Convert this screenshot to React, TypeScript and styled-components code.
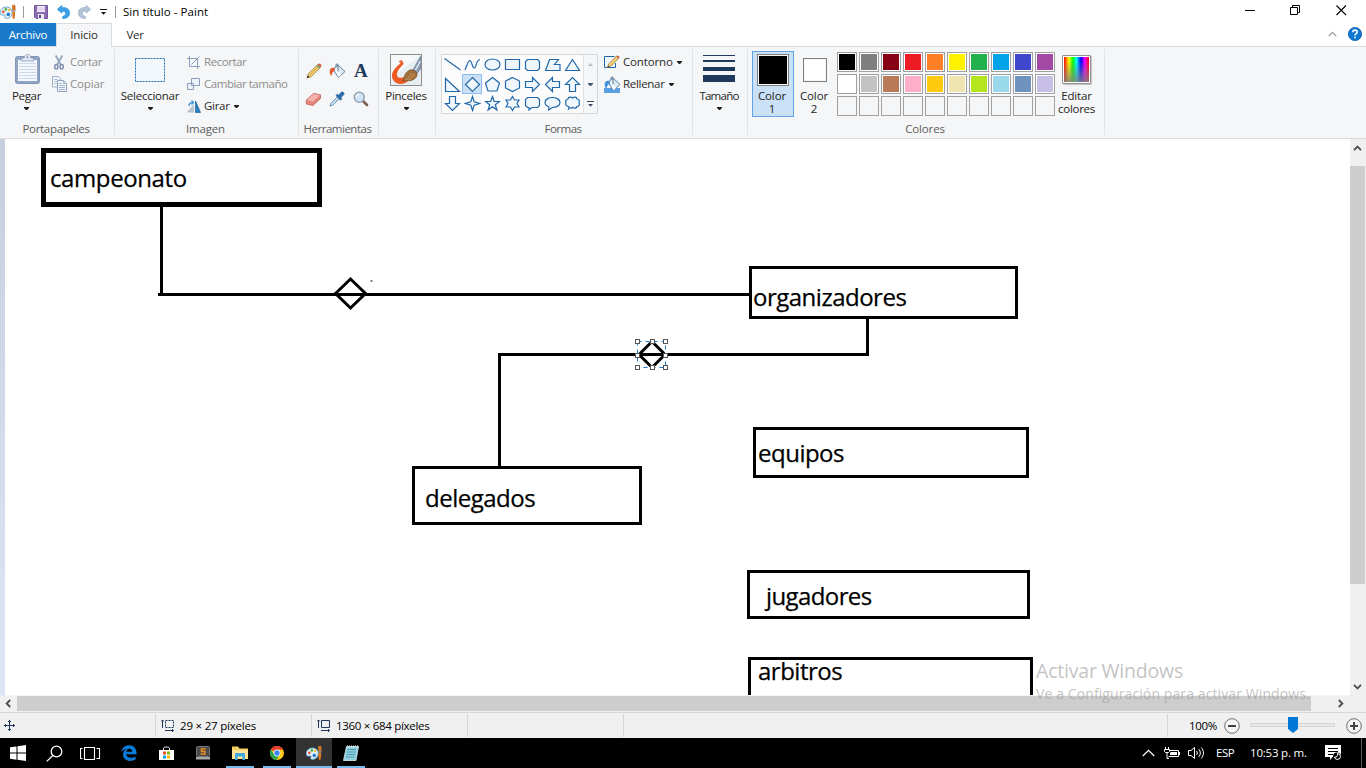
import React from 'react';
import styled, { createGlobalStyle, css } from 'styled-components';

const GlobalStyle = createGlobalStyle`
  * { box-sizing: border-box; }
  body { margin: 0; overflow: hidden; background: #fff; }
  svg { display: block; flex: none; }
`;

const Window = styled.div`
  width: 1366px;
  height: 768px;
  display: flex;
  flex-direction: column;
  overflow: hidden;
  background: #fff;
  color: #1e1e1e;
  font: 11.5px/13px 'Open Sans', 'Noto Sans', sans-serif;
  white-space: nowrap;
`;

const Label = styled.span<{ $ls?: number }>`
  letter-spacing: ${(p) => p.$ls ?? -0.3}px;
`;

/* ---------- title bar ---------- */

const TitleBar = styled.header`
  height: 23px;
  display: flex;
  align-items: center;
  color: #000;
`;
const QuickAccess = styled.div`
  display: flex;
  align-items: center;
  width: 123px;
  height: 23px;
`;
const TitleRule = styled.i<{ $left: number; $right: number }>`
  width: 1px;
  height: 12px;
  margin: 0 ${(p) => p.$right}px 0 ${(p) => p.$left}px;
  background: #9b9b9b;
`;
const QuickIcon = styled.span<{ $w: number }>`
  width: ${(p) => p.$w}px;
  display: flex;
`;
const WindowButtons = styled.div`
  margin-left: auto;
  display: flex;
  gap: 35px;
  padding: 0 19px 2px 0;
`;

/* ---------- tabs ---------- */

const TabRow = styled.nav`
  height: 24px;
  display: flex;
  border-bottom: 1px solid #dadbdc;
`;
const Tab = styled.div<{ $kind?: 'file' | 'active' }>`
  display: flex;
  align-items: center;
  justify-content: center;
  width: ${(p) => (p.$kind ? 56 : 46)}px;
  height: 23px;
  color: #2b2b2b;
  ${(p) => p.$kind === 'file' && css`background: #1979ca; color: #fff;`}
  ${(p) =>
    p.$kind === 'active' &&
    css`
      height: 24px;
      padding-bottom: 2px;
      background: #f5f6f7;
      border: 1px solid #dadbdc;
      border-bottom: 0;
    `}
`;
const TabTools = styled.div`
  margin-left: auto;
  display: flex;
  align-items: center;
  gap: 11px;
  padding: 0 4px 1px 0;
`;

/* ---------- ribbon ---------- */

const Ribbon = styled.section`
  height: 92px;
  display: flex;
  align-items: flex-start;
  padding-top: 2px;
  background: #f5f6f7;
  border-bottom: 1px solid #dadbdc;
`;
const Group = styled.div<{ $w: number }>`
  width: ${(p) => p.$w}px;
  height: 86px;
  display: flex;
  flex-direction: column;
  border-right: 1px solid #e2e3e4;
`;
const GroupBody = styled.div<{ $left?: number }>`
  height: 73px;
  display: flex;
  align-items: flex-start;
  padding-left: ${(p) => p.$left ?? 0}px;
`;
const GroupName = styled.div`
  padding-right: 2px;
  text-align: center;
  color: #5d5d5d;
`;
const BigButton = styled.div<{ $w: number }>`
  width: ${(p) => p.$w}px;
  display: flex;
  flex-direction: column;
  align-items: center;
`;
const BigIcon = styled.div`
  height: 40px;
  padding-top: 5px;
`;
const BigCaret = styled.div`
  padding-top: 5px;
`;
const SmallButtons = styled.div<{ $left: number }>`
  display: flex;
  flex-direction: column;
  padding: 2px 0 0 ${(p) => p.$left}px;
`;
const SmallButton = styled.div<{ $off?: boolean; $icon?: number }>`
  height: 22px;
  display: flex;
  align-items: center;
  gap: 4px;
  color: ${(p) => (p.$off ? '#8d8d8d' : '#2b2b2b')};
  & > svg:first-child { margin-right: ${(p) => p.$icon ?? 0}px; }
  & > ${Label} { padding-bottom: 2px; }
`;
const ToolGrid = styled.div`
  display: grid;
  grid-template-columns: repeat(3, 23.5px);
  grid-template-rows: repeat(2, 28px);
  padding: 8px 0 0 3px;
  place-items: center;
`;
const Gallery = styled.div`
  width: 157px;
  height: 60px;
  margin-top: 5px;
  display: flex;
  border: 1px solid #d5d6d8;
  background: #fcfcfd;
`;
const ShapeGrid = styled.div`
  width: 142px;
  display: grid;
  grid-template-columns: repeat(7, 20px);
  grid-template-rows: 19px 20px 19px;
  border-right: 1px solid #e0e1e3;
`;
const ShapeCell = styled.div<{ $on?: boolean }>`
  display: grid;
  place-items: center;
  ${(p) => p.$on && css`background: #c9e0f7; box-shadow: inset 0 0 0 1px #8dbdf0;`}
`;
const GalleryScroll = styled.div`
  flex: 1;
  display: grid;
  grid-template-rows: 19px 20px 19px;
  place-items: center;
  background: #f5f6f7;
`;
const Bars = styled.div`
  width: 32px;
  height: 28px;
  padding-top: 1px;
  display: flex;
  flex-direction: column;
  justify-content: space-between;
`;
const Bar = styled.i<{ $h: number }>`
  height: ${(p) => p.$h}px;
  background: #1e395b;
`;
const ColorButton = styled.div<{ $on?: boolean }>`
  width: 42px;
  height: 66px;
  margin-top: 2px;
  display: flex;
  flex-direction: column;
  align-items: center;
  text-align: center;
  border: 1px solid ${(p) => (p.$on ? '#62a2e4' : 'transparent')};
  background: ${(p) => (p.$on ? '#c9e0f7' : 'transparent')};
`;
const ColorWell = styled.div`
  height: 36px;
  display: grid;
  place-items: center;
  margin-bottom: 1px;
`;
const ColorName = styled(Label)`
  padding-right: 2px;
`;
const BigSwatch = styled.i<{ $size: number; $fill: string }>`
  display: block;
  width: ${(p) => p.$size}px;
  height: ${(p) => p.$size}px;
  border: 1px solid #7f7f7f;
  background: ${(p) => p.$fill};
  box-shadow: inset 0 0 0 1px #f5f6f7;
`;
const Palette = styled.div`
  display: grid;
  grid-template-columns: repeat(10, 20px);
  grid-auto-rows: 20px;
  gap: 2px;
  margin: 3px 0 0 1px;
`;
const Swatch = styled.i<{ $fill?: string }>`
  border: 1px solid #a0a0a0;
  background: ${(p) => p.$fill ?? '#f5f6f7'};
  box-shadow: inset 0 0 0 1px ${(p) => (p.$fill ? '#fff' : '#f5f6f7')};
`;
const EditIcon = styled.div`
  height: 40px;
  padding-top: 6px;
`;
const Spectrum = styled.i`
  display: block;
  width: 29px;
  height: 29px;
  border: 1px solid #8f8f8f;
  border-radius: 1px;
  padding: 1px;
  background: linear-gradient(to bottom, rgba(128, 128, 128, 0) 15%, rgba(128, 128, 128, 0.85)) content-box,
    linear-gradient(to right, #f00, #ff0 20%, #0f0 36%, #0ff 50%, #00f 68%, #f0f 84%, #f00) content-box, #fff;
  box-shadow: 1px 1px 1px #c4c4c4;
`;

/* ---------- canvas ---------- */

const Workspace = styled.main`
  height: 557px;
  display: flex;
`;
const Gutter = styled.div`
  width: 5px;
  background: linear-gradient(#c5cfdf, #dce6f4);
`;
const Canvas = styled.div`
  position: relative;
  flex: 1;
  background: #fff;
  overflow: hidden;
  border-bottom: 1px solid #f4f4f4;
`;
const Node = styled.div<{ $x: number; $y: number; $w: number; $h: number; $b?: number; $tx: number; $ty: number; $ls?: number }>`
  position: absolute;
  left: ${(p) => p.$x - 5}px;
  top: ${(p) => p.$y - 139}px;
  width: ${(p) => p.$w}px;
  height: ${(p) => p.$h}px;
  border: ${(p) => p.$b ?? 3}px solid #000;
  padding: ${(p) => p.$ty}px 0 0 ${(p) => p.$tx}px;
  color: #000;
  font: 24px/20px 'Open Sans', 'Noto Sans', sans-serif;
  letter-spacing: ${(p) => p.$ls ?? -0.5}px;
  -webkit-text-stroke: 0.25px #000;
`;
const Links = styled.svg`
  position: absolute;
  left: 0;
  top: 0;
`;
const Watermark = styled.div`
  position: absolute;
  left: 1036px;
  top: 658px;
  color: rgba(150, 150, 150, 0.58);
  font: 19.5px/26px 'Open Sans', sans-serif;
`;
const WatermarkNote = styled.div`
  font-size: 14px;
  line-height: 19px;
`;
const VScroll = styled.div`
  width: 16px;
  display: flex;
  flex-direction: column;
  background: #f0f0f0;
`;
const VThumb = styled.i`
  width: 15px;
  height: 418px;
  margin: 8px 0 auto;
  background: #cdcdcd;
`;
const ScrollEnd = styled.span<{ $w: number; $h: number }>`
  flex: none;
  width: ${(p) => p.$w}px;
  height: ${(p) => p.$h}px;
  display: grid;
  place-items: center;
`;
const HScroll = styled.div`
  height: 16px;
  display: flex;
  align-items: flex-start;
  background: #f0f0f0;
`;
const HThumb = styled.i`
  flex: none;
  width: 1294px;
  height: 15px;
  margin-right: 21px;
  background: #cdcdcd;
`;

/* ---------- status bar ---------- */

const StatusBar = styled.footer`
  height: 26px;
  display: flex;
  background: #f0f0f0;
  border-top: 1px solid #d7d7d7;
  color: #000;
`;
const StatusCell = styled.div<{ $w: number; $left?: number }>`
  width: ${(p) => p.$w}px;
  height: 23px;
  margin-top: 1px;
  display: flex;
  align-items: center;
  gap: 5px;
  padding-left: ${(p) => p.$left ?? 5}px;
  border-right: 1px solid #d7d7d7;
`;
const Zoom = styled.div`
  flex: 1;
  display: flex;
  align-items: center;
  padding: 1px 3px 0 21px;
`;
const ZoomValue = styled.span`
  width: 35px;
  padding-bottom: 2px;
`;
const Track = styled.div`
  width: 85px;
  height: 4px;
  margin: 0 11px 2px 10px;
  border: 1px solid #d6d6d6;
  background: #e7eaea;
  display: flex;
  align-items: center;
  justify-content: center;
`;

/* ---------- taskbar ---------- */

const Taskbar = styled.div`
  height: 30px;
  display: flex;
  gap: 1px;
  background: #000;
  color: #fff;
`;
const Task = styled.div<{ $open?: boolean; $active?: boolean }>`
  width: 36px;
  height: 30px;
  display: flex;
  align-items: center;
  justify-content: center;
  background: ${(p) =>
    p.$active
      ? 'linear-gradient(#76b9ed, #76b9ed) bottom / 36px 2px no-repeat, #333'
      : p.$open
        ? 'linear-gradient(#76b9ed, #76b9ed) bottom / 28px 2px no-repeat'
        : 'none'};
`;
const Tray = styled.div`
  width: 224px;
  margin-left: auto;
  display: flex;
  align-items: center;
`;
const TrayItem = styled.span<{ $w: number }>`
  width: ${(p) => p.$w}px;
  display: flex;
  & > ${Label} { padding-bottom: 2px; }
`;
const ShowDesktop = styled.i`
  align-self: stretch;
  width: 1px;
  background: #5a5a5a;
`;

/* ---------- drawings ---------- */

const Caret = ({ color = '#1e1e1e', up = false }: { color?: string; up?: boolean }) => (
  <svg width="5" height="3" viewBox="0 0 5 3">
    <path d={up ? 'M0 3h5L2.5 0z' : 'M0 0h5v1L3 3H2L0 1z'} fill={color} />
  </svg>
);

const PaintLogo = () => (
  <svg width="16" height="16" viewBox="0 0 16 16">
    <path d="M6.500 3c3.600 0 5.800 2.200 5.800 5.400 0 3.200-2.200 6-5.800 6-2 0-2.200-1.200-1.600-2.200.5-.9-.2-1.600-1.400-1.200C1.500 11.600.2 10.600.2 8.700.2 5.500 2.900 3 6.500 3z" fill="#e3f1f9" stroke="#5d9dc4" strokeWidth=".9" />
    <circle cx="3.300" cy="7.800" r="1.400" fill="#e8543c" />
    <circle cx="5.900" cy="5.400" r="1.300" fill="#4fae3c" />
    <circle cx="9.200" cy="6" r="1.200" fill="#f2b731" />
    <circle cx="8.300" cy="10.400" r="1.800" fill="#2a7fc6" />
    <path d="M12.200 7.500h3l-.4 6.200-1 1.800-1.200-1.800z" fill="#e07a1c" />
    <path d="M12 1.500 13.200.300l.4 1.500 1-1.500.9 1.900v4.300h-3.200z" fill="#c87328" />
    <path d="M12.200 6.200h3.100v1.400h-3.100z" fill="#8a97a3" />
  </svg>
);

const SaveIcon = () => (
  <svg width="14" height="14" viewBox="0 0 14 14">
    <path d="M.5.5h13v13H2L.5 12z" fill="#8d6bb3" stroke="#75569c" />
    <path d="M3 1h8v6H3z" fill="#f3eefa" />
    <path d="M3 3h8M3 5h8" stroke="#cfc0e2" />
    <path d="M4 9h6v5H4z" fill="#e9e9f2" />
    <path d="M5 10h2v3H5z" fill="#62458c" />
  </svg>
);

const UndoArrow = ({ color, dark, flip = false }: { color: string; dark: string; flip?: boolean }) => (
  <svg width="13" height="14" viewBox="0 0 13 14">
    <path
      transform={flip ? 'matrix(-1 0 0 1 13 0)' : undefined}
      d="M4.800.300.300 4.300l4.500 4V6.300c2.500-.2 3.800.6 3.800 2.200 0 1.500-1.100 2.300-2.900 2.800v2.400c4.500-.4 7-2.500 7-5.800 0-3.800-3-5.600-7.900-5.500z"
      fill={color}
      stroke={dark}
      strokeWidth=".6"
    />
  </svg>
);

const Clipboard = () => (
  <svg width="27" height="30" viewBox="-2 0 27 30">
    <rect x=".5" y="2.500" width="24" height="27" rx="2" fill="#91a4c3" stroke="#8296b8" />
    <path d="M3 6h19v21H3z" fill="#f4f8fd" />
    <path d="M4 9.500h17M4 12.500h17M4 15.500h17M4 18.500h17M4 21.500h17M4 24.500h17" stroke="#ccd8ea" />
    <path d="M6 7V4.500l3-.5c.5-2 1.500-3.500 3.500-3.500S15.500 2 16 4l3 .5V7z" fill="#e0e8f2" stroke="#8b9cb8" strokeWidth=".8" />
    <circle cx="12.500" cy="3.200" r="1" fill="#8b9cb8" />
  </svg>
);

const CutIcon = () => (
  <svg width="12" height="15" viewBox="-2 0 12 15">
    <path d="M1.700.500 6.700 9.500M8.300.500 3.300 9.500" stroke="#97a8c1" strokeWidth="1.900" fill="none" />
    <ellipse cx="2.300" cy="11.700" rx="1.600" ry="2.300" fill="none" stroke="#7b90b0" strokeWidth="1.500" />
    <ellipse cx="7.700" cy="11.700" rx="1.600" ry="2.300" fill="none" stroke="#7b90b0" strokeWidth="1.500" />
  </svg>
);

const CopyIcon = () => (
  <svg width="15" height="16" viewBox="0 0 15 16">
    <path d="M.5.500h6l2 2v8.500h-8z" fill="#f3f6fa" stroke="#9fafc8" />
    <path d="M2 3.500h4M2 5.500h4M2 7.500h3" stroke="#b5c3d8" />
    <path d="M5.500 4.500h6l3 3v8h-9z" fill="#f3f6fa" stroke="#8fa2bf" />
    <path d="M11.500 4.500v3h3M7 9.500h6M7 11.500h6M7 13.500h6M7 7.500h3" stroke="#a3b4cd" fill="none" />
  </svg>
);

const SelectIcon = () => (
  <svg width="30" height="29" viewBox="0 -4 30 29">
    <rect x=".5" y=".5" width="29" height="23" fill="#f3f8fd" stroke="#1f6fb4" strokeDasharray="2 1" />
  </svg>
);

const CropIcon = () => (
  <svg width="13" height="13" viewBox="0 0 13 13" fill="none" stroke="#8c9ebb">
    <path d="M0 2.500h10.500V13M2.500 0v10.500H13M12.500.500l-8 8" />
  </svg>
);

const ResizeIcon = () => (
  <svg width="13" height="12" viewBox="0 0 13 12" fill="#eef3f9" stroke="#8c9ebb">
    <path d="M.5 5.500h6v6h-6zM4.500.500h8v7h-8z" />
  </svg>
);

const RotateIcon = () => (
  <svg width="15" height="13" viewBox="1 0 15 13">
    <path d="M8 12.500V4L.500 12.500z" fill="#b9c4d0" />
    <path d="M9.500 12.500V1l5 11.500z" fill="#2a7fc0" stroke="#1a5f9c" strokeWidth=".7" />
    <path d="M3 6c0-2.500 1-3.500 3.500-3.500M5.500.500l2 2-2 2" fill="none" stroke="#2a8be0" strokeWidth="1.200" />
  </svg>
);

const PencilIcon = () => (
  <svg width="16" height="16" viewBox="0 0 16 16">
    <path d="M1 15l1.500-4.500L11.500 1.800l2.800 2.700L5.300 13.500z" fill="#f8d77a" stroke="#9a7433" strokeWidth=".8" />
    <path d="M3.800 12 12.600 3.200" stroke="#c08f35" />
    <path d="M1 15l.8-2.600 1.700 1.700z" fill="#222" />
    <path d="M10.500 2.800l1.200-1.200 2.800 2.700-1.200 1.200z" fill="#77a06a" />
    <path d="M11.700 1.600 13 .500c1.500 0 2.700 1.200 2.500 2.600l-1 1.200z" fill="#d95f43" />
  </svg>
);

const BucketIcon = ({ wide = false }: { wide?: boolean }) => (
  <svg width="17" height="17" viewBox="0 0 17 17">
    {wide && <path d="M0 12h16v5H0z" fill="#5b9fe3" />}
    <path d="M4 6.500 9 2l7 6.500-6.500 6z" fill="#dbe9f4" stroke="#54789c" strokeWidth=".9" />
    <path d="M6 6.500l3.500 8L12 12 8 5z" fill="#fff" opacity=".8" />
    <path d="M9 8.500V2c0-1.500-2-1.500-2 0v2" fill="none" stroke="#4d6c8c" strokeWidth=".9" />
    <path d="M5.500 5C3 4.300.700 5.500.700 8.500c0 2 .8 3.500 2 4.500 0-3 1-4.500 3.300-5.500z" fill={wide ? '#3f8fdf' : '#e5572d'} />
  </svg>
);

const LetterTool = styled.b`
  font: bold 19px/20px 'Liberation Serif', serif;
  color: #1e395b;
`;

const EraserIcon = () => (
  <svg width="17" height="15" viewBox="0 0 17 15">
    <path d="M1 8.500 8.500 1.500l7 1.500v3.500L8 13.500 1.500 12z" fill="#e8857c" stroke="#b85a52" strokeWidth=".8" />
    <path d="M1 8.500 8.500 1.500l7 1.500-7.300 7.200z" fill="#f6b3ac" stroke="#c96d65" strokeWidth=".6" />
  </svg>
);

const DropperIcon = () => (
  <svg width="16" height="16" viewBox="0 0 16 16">
    <path d="M1 15l.8-2.500L8.500 5.700l1.900 1.900L3.500 14.300z" fill="#cfe2f3" stroke="#5f83a8" strokeWidth=".9" />
    <path d="M7 4.500 8.500 3.300l1.300 1L12 1.500c1.700-1.500 4 .8 2.500 2.500l-2.700 2.500 1 1.200-1.300 1.500z" fill="#2a6fb4" stroke="#1d4e88" strokeWidth=".7" />
  </svg>
);

const LensIcon = () => (
  <svg width="16" height="16" viewBox="0 0 16 16">
    <path d="M10 10l4 4" stroke="#7a5f52" strokeWidth="2.600" strokeLinecap="round" />
    <circle cx="6.300" cy="6.300" r="5" fill="#cfe4f7" stroke="#93a3b5" strokeWidth="1.500" />
    <path d="M3.500 6a3 3 0 0 1 3-3" stroke="#fff" strokeWidth="1.200" fill="none" />
  </svg>
);

const BrushIcon = () => (
  <svg width="32" height="32" viewBox="0 0 32 32">
    <rect x=".5" y=".5" width="31" height="31" fill="#e6eef2" stroke="#8e8e8e" />
    <path d="M1 1h30L1 24z" fill="#f6f9fa" />
    <path d="M13 6c-4 .3-5.500 1.500-2.500 2.600C12 9.200 5 13 2.500 18.500.500 24 4 30 11 30c2.500 0 5-1 7-3l-3-4c-6 2-9.500 0-7.500-5C9 13.500 14 11 13.500 8.700 13.200 7.500 10.500 7.400 13 6z" fill="#ee5a24" />
    <path d="M23 16 30.500 2.500v12.500l-4 5z" fill="#8ba0b3" stroke="#5f7285" strokeWidth=".7" />
    <path d="M25.500 16 30.500 7" stroke="#dfe8ef" strokeWidth="1.500" />
    <path d="M12.500 27c2-2 1-6 5-9.500 3-2.500 6-2 8 0s2.200 4.500-.5 7c-3.500 3.200-8.500 2-12.500 2.500z" fill="#a2713a" stroke="#6e4a22" strokeWidth=".7" />
    <path d="M15.500 26c3-1 4-4 6.500-7M18.500 26c2.500-1 4.500-3 5.500-6" stroke="#d3a367" strokeWidth=".8" fill="none" />
  </svg>
);

const shapes = [
  'M.5 2.500l16 11.500',
  'M1 14C3.500 8 4.500 3.500 6.500 5s1.500 7.500 4 7C12.500 11.500 12 4 16 3.500',
  'M8.500 3c4 0 7.500 2.300 7.500 5.500S12.500 14 8.500 14 1 11.700 1 8.500 4.500 3 8.500 3z',
  'M1.500 3.500h14v10h-14z',
  'M3.500 3.500h10l2 2v7l-2 2h-10l-2-2v-7z',
  'M5.500 3.500h9l-4 5h5.500v6H1.500z',
  'M8.500 3.500l7 11h-14z',
  'M1.500 2.500v13h14z',
  'M8.500 1.500l7 7-7 7-7-7z',
  'M8.500 1.500l7 5.500-2.500 8H4L1.500 7z',
  'M8.500 1.500l7 3.500v7l-7 3.500-7-3.500V5z',
  'M1.500 5.500h7v-4l7 7-7 7v-4h-7z',
  'M15.500 5.500h-7v-4l-7 7 7 7v-4h7z',
  'M5.500 15.500v-7h-4l7-7 7 7h-4v7z',
  'M5.500 1.500v7h-4l7 7 7-7h-4v-7z',
  'M8.500 1.500l1.700 5.300 5.300 1.700-5.300 1.700-1.700 5.300-1.700-5.300L1.500 8.500l5.300-1.700z',
  'M8.500 1.500l1.800 5h5.200l-4.200 3.200 1.600 5.300-4.400-3.200L4.100 15l1.600-5.300L1.500 6.500h5.200z',
  'M8.500 1.500l2 3.500h4.500l-2 3.500 2 3.500h-4.500l-2 3.500-2-3.500H2l2-3.500L2 5h4.500z',
  'M3.500 2.500h10l2 2v6l-2 2H8l-3 2.500v-2.500H3.500l-2-2v-6z',
  'M8.500 2.500c4 0 7.500 2 7.500 5s-3.500 5-7.500 5l-4 2.500.5-3C2.500 11 1 9.500 1 7.500c0-3 3.500-5 7.500-5z',
  'M4 4c0-2 3-2.500 4.500-1C10 1.500 13 2 13 4c2 0 3 2 2 3.500 1 2 0 4-2 4-.5 2-3 2-4 .8-1.500 1.200-4 1-4.500-.8-2 0-3.500-1.500-2.500-3.500C1 6.500 2 4.500 4 4zM5 13l-1 2',
];

const ShapeIcon = ({ d }: { d: string }) => (
  <svg width="17" height="17" viewBox="0 0 17 17">
    <path d={d} fill="#f0f7fc" stroke="#2168a8" strokeWidth="1.200" />
  </svg>
);

const OutlineIcon = () => (
  <svg width="16" height="14" viewBox="0 0 16 14">
    <path d="M10.500 1.500h-10v11h11V8" fill="#f0f7fc" stroke="#2168a8" />
    <path d="M3.500 12.500l1.200-3.700L12.300 1.300l2.300 2.200-7.500 7.500z" fill="#f6cd74" stroke="#8a6d3b" strokeWidth=".7" />
    <path d="M12.300 1.300l1-.9c1.300 0 2.300 1 2.300 2.200l-1 .9z" fill="#d95f43" />
    <path d="M3.500 12.500l.6-1.800 1.300 1.200z" fill="#222" />
  </svg>
);

const HelpIcon = () => (
  <svg width="14" height="14" viewBox="0 0 14 14">
    <circle cx="7" cy="7" r="6.600" fill="#0f78d4" stroke="#0a5ca8" strokeWidth=".8" />
    <path d="M4.800 5.200c0-2.900 4.400-2.700 4.400-.2C9.200 6.700 7 6.600 7 8.500" fill="none" stroke="#fff" strokeWidth="1.600" />
    <path d="M6.200 9.700h1.600v1.600H6.200z" fill="#fff" />
  </svg>
);

const ScrollArrow = ({ turn = 0 }: { turn?: number }) => (
  <svg width="9" height="9" viewBox="0 0 9 9">
    <path d="M1 6.200 4.500 2.700 8 6.200" fill="none" stroke="#505050" strokeWidth="1.900" transform={`rotate(${turn} 4.500 4.500)`} />
  </svg>
);

const SizeIcon = ({ dashed = false }: { dashed?: boolean }) => (
  <svg width="14" height="13" viewBox="0 0 14 13" stroke="#1e395b" fill="none">
    <path d="M1.500 9V1M0 2.500 1.500 1 3 2.500M4 11.500h8.500M11 10l1.500 1.500L11 13" />
    <path d="M4.500 1.500h8v7h-8z" strokeDasharray={dashed ? '2 1' : undefined} />
  </svg>
);

const RoundButton = ({ plus = false }: { plus?: boolean }) => (
  <svg width="16" height="16" viewBox="0 0 16 16">
    <circle cx="8" cy="8" r="7.300" fill="#f6f6f6" stroke="#6d6d6d" />
    <path d={plus ? 'M4 8h8M8 4v8' : 'M4 8h8'} stroke="#444" strokeWidth="2" />
  </svg>
);

const Handle = ({ x, y }: { x: number; y: number }) => (
  <rect x={x - 2} y={y - 2} width="4" height="4" fill="#fff" stroke="#555" />
);

const palette = [
  '#000', '#7f7f7f', '#880015', '#ed1c24', '#ff7f27', '#fff200', '#22b14c', '#00a2e8', '#3f48cc', '#a349a4',
  '#fff', '#c3c3c3', '#b97a57', '#ffaec9', '#ffc90e', '#efe4b0', '#b5e61d', '#99d9ea', '#7092be', '#c8bfe7',
  ...Array<undefined>(10).fill(undefined),
];

export default function App() {
  return (
    <Window>
      <GlobalStyle />
      <TitleBar>
        <QuickAccess>
          <PaintLogo />
          <TitleRule $left={7} $right={10} />
          <QuickIcon $w={23}><SaveIcon /></QuickIcon>
          <QuickIcon $w={21}><UndoArrow color="#3ba0e6" dark="#1f8fdc" /></QuickIcon>
          <QuickIcon $w={22}><UndoArrow color="#b3c3d6" dark="#98abc3" flip /></QuickIcon>
          <svg width="7" height="6" viewBox="0 0 7 6"><path d="M0 0h7v1H0zM1 3h5L3.500 5.700z" fill="#111" /></svg>
          <TitleRule $left={8} $right={0} />
        </QuickAccess>
        <Label $ls={0.05}>Sin título - Paint</Label>
        <WindowButtons>
          <svg width="10" height="11" viewBox="0 0 10 11"><path d="M0 5.500h10" stroke="#000" /></svg>
          <svg width="11" height="11" viewBox="0 0 11 11"><path d="M.5 2.500h7v7h-7zM2.500 2.500v-2h7v7h-2" fill="none" stroke="#000" /></svg>
          <svg width="11" height="11" viewBox="0 0 11 11"><path d="M.500.500l9.500 9.500M10 .500.500 10" stroke="#000" strokeWidth="1.100" /></svg>
        </WindowButtons>
      </TitleBar>

      <TabRow>
        <Tab $kind="file"><Label $ls={-0.2}>Archivo</Label></Tab>
        <Tab $kind="active"><Label $ls={-0.15}>Inicio</Label></Tab>
        <Tab><Label>Ver</Label></Tab>
        <TabTools>
          <svg width="9" height="6" viewBox="0 0 9 6"><path d="M.800 5 4.500 1.300 8.200 5" fill="none" stroke="#a0a0a0" strokeWidth="1.300" /></svg>
          <HelpIcon />
        </TabTools>
      </TabRow>

      <Ribbon>
        <Group $w={115}>
          <GroupBody $left={1}>
            <BigButton $w={51}>
              <BigIcon><Clipboard /></BigIcon>
              <Label>Pegar</Label>
              <BigCaret><Caret /></BigCaret>
            </BigButton>
            <SmallButtons $left={0}>
              <SmallButton $off $icon={2}><CutIcon /><Label>Cortar</Label></SmallButton>
              <SmallButton $off $icon={-1}><CopyIcon /><Label $ls={-0.15}>Copiar</Label></SmallButton>
            </SmallButtons>
          </GroupBody>
          <GroupName><Label>Portapapeles</Label></GroupName>
        </Group>

        <Group $w={184}>
          <GroupBody>
            <BigButton $w={70}>
              <BigIcon><SelectIcon /></BigIcon>
              <Label $ls={-0.25}>Seleccionar</Label>
              <BigCaret><Caret /></BigCaret>
            </BigButton>
            <SmallButtons $left={2}>
              <SmallButton $off><CropIcon /><Label $ls={-0.45}>Recortar</Label></SmallButton>
              <SmallButton $off><ResizeIcon /><Label $ls={-0.45}>Cambiar tamaño</Label></SmallButton>
              <SmallButton $icon={-2}><RotateIcon /><Label>Girar</Label><Caret /></SmallButton>
            </SmallButtons>
          </GroupBody>
          <GroupName><Label $ls={-0.2}>Imagen</Label></GroupName>
        </Group>

        <Group $w={80}>
          <GroupBody>
            <ToolGrid>
              <PencilIcon />
              <BucketIcon />
              <LetterTool>A</LetterTool>
              <EraserIcon />
              <DropperIcon />
              <LensIcon />
            </ToolGrid>
          </GroupBody>
          <GroupName><Label $ls={-0.5}>Herramientas</Label></GroupName>
        </Group>

        <Group $w={57}>
          <GroupBody>
            <BigButton $w={54}>
              <BigIcon><BrushIcon /></BigIcon>
              <Label>Pinceles</Label>
              <BigCaret><Caret /></BigCaret>
            </BigButton>
          </GroupBody>
        </Group>

        <Group $w={257}>
          <GroupBody $left={5}>
            <Gallery>
              <ShapeGrid>
                {shapes.map((d, i) => (
                  <ShapeCell key={i} $on={i === 8}><ShapeIcon d={d} /></ShapeCell>
                ))}
              </ShapeGrid>
              <GalleryScroll>
                <Caret up color="#b9bcc2" />
                <Caret color="#4a5a70" />
                <svg width="7" height="6" viewBox="0 0 7 6"><path d="M0 0h7v1H0zM1 3h5L3.500 5.700z" fill="#3d4b60" /></svg>
              </GalleryScroll>
            </Gallery>
            <SmallButtons $left={6}>
              <SmallButton $icon={-1}><OutlineIcon /><Label $ls={-0.15}>Contorno</Label><Caret /></SmallButton>
              <SmallButton $icon={-2}><BucketIcon wide /><Label>Rellenar</Label><Caret /></SmallButton>
            </SmallButtons>
          </GroupBody>
          <GroupName><Label $ls={-0.5}>Formas</Label></GroupName>
        </Group>

        <Group $w={55}>
          <GroupBody>
            <BigButton $w={52}>
              <BigIcon>
                <Bars><Bar $h={1} /><Bar $h={2} /><Bar $h={4} /><Bar $h={7} /></Bars>
              </BigIcon>
              <Label $ls={-0.75}>Tamaño</Label>
              <BigCaret><Caret /></BigCaret>
            </BigButton>
          </GroupBody>
        </Group>

        <Group $w={357}>
          <GroupBody $left={4}>
            <ColorButton $on>
              <ColorWell><BigSwatch $size={32} $fill="#000" /></ColorWell>
              <ColorName $ls={-0.1}>Color<br />1</ColorName>
            </ColorButton>
            <ColorButton>
              <ColorWell><BigSwatch $size={24} $fill="#fff" /></ColorWell>
              <ColorName $ls={-0.1}>Color<br />2</ColorName>
            </ColorButton>
            <Palette>
              {palette.map((c, i) => <Swatch key={i} $fill={c} />)}
            </Palette>
            <BigButton $w={43}>
              <EditIcon><Spectrum /></EditIcon>
              <Label $ls={-0.2}>Editar</Label>
              <Label>colores</Label>
            </BigButton>
          </GroupBody>
          <GroupName><Label $ls={-0.15}>Colores</Label></GroupName>
        </Group>
      </Ribbon>

      <Workspace>
        <Gutter />
        <Canvas>
          <Node $x={41} $y={148} $w={281} $h={59} $b={5} $tx={4} $ty={15} $ls={-0.4}>campeonato</Node>
          <Node $x={749} $y={266} $w={269} $h={53} $tx={1} $ty={18}>organizadores</Node>
          <Node $x={753} $y={427} $w={276} $h={51} $tx={2} $ty={13}>equipos</Node>
          <Node $x={412} $y={466} $w={230} $h={59} $tx={10} $ty={19}>delegados</Node>
          <Node $x={747} $y={570} $w={283} $h={49} $tx={16} $ty={13} $ls={-0.6}>jugadores</Node>
          <Node $x={748} $y={657} $w={285} $h={60} $tx={7} $ty={1}>arbitros</Node>
          <Links width="1345" height="556" viewBox="5 139 1345 556" fill="none" stroke="#000" strokeWidth="3">
            <path d="M161.500 207v88M158 294.500h591M335.500 293.500l15-14.500 15 14.500-15 14.500z" />
            <path d="M499.500 466V354.500h368V319M639 354.500l13-13 13 13-13 13z" />
            <path d="M370.500 281h2" stroke="#555" strokeWidth="1.500" />
            <rect x="637.500" y="341.500" width="28" height="26" stroke="#fff" strokeWidth="1" />
            <rect x="637.500" y="341.500" width="28" height="26" stroke="#1b7ad0" strokeWidth="1" strokeDasharray="4 4" />
            <g strokeWidth="1">
              {[341.5, 355.5, 367.5].flatMap((y) =>
                [637.5, 652.5, 665.5]
                  .filter((x) => !(x === 652.5 && y === 355.5))
                  .map((x) => <Handle key={`${x}-${y}`} x={x} y={y} />),
              )}
            </g>
          </Links>
        </Canvas>
        <VScroll>
          <ScrollEnd $w={15} $h={19}><ScrollArrow /></ScrollEnd>
          <VThumb />
          <ScrollEnd $w={15} $h={19}><ScrollArrow turn={180} /></ScrollEnd>
        </VScroll>
      </Workspace>
      <HScroll>
        <ScrollEnd $w={17} $h={15}><ScrollArrow turn={-90} /></ScrollEnd>
        <HThumb />
        <ScrollEnd $w={17} $h={15}><ScrollArrow turn={90} /></ScrollEnd>
      </HScroll>
      <Watermark>
        <Label $ls={-0.2}>Activar Windows</Label>
        <WatermarkNote><Label $ls={0.1}>Ve a Configuración para activar Windows.</Label></WatermarkNote>
      </Watermark>

      <StatusBar>
        <StatusCell $w={156} $left={4}>
          <svg width="11" height="11" viewBox="0 0 11 11" stroke="#1e395b" fill="none">
            <path d="M5.500 0v11M0 5.500h11M4 2l1.500-1.500L7 2M4 9l1.500 1.500L7 9M2 4 .500 5.500 2 7M9 4l1.500 1.500L9 7" />
          </svg>
        </StatusCell>
        <StatusCell $w={156}><SizeIcon dashed /><Label $ls={-0.2}>29 × 27 píxeles</Label></StatusCell>
        <StatusCell $w={156}><SizeIcon /><Label>1360 × 684 píxeles</Label></StatusCell>
        <StatusCell $w={156} />
        <StatusCell $w={544} />
        <Zoom>
          <ZoomValue><Label>100%</Label></ZoomValue>
          <RoundButton />
          <Track>
            <svg width="10" height="16" viewBox="0 0 10 16"><path d="M0 0h10v12l-5 4-5-4z" fill="#0078d7" /></svg>
          </Track>
          <RoundButton plus />
        </Zoom>
      </StatusBar>

      <Taskbar>
        <Task>
          <svg width="16" height="16" viewBox="0 0 16 16" fill="#fff">
            <path d="M0 2.300 6.500 1.400v6.200H0zM7.500 1.200 16 0v7.600H7.500zM0 8.500h6.500v6.200L0 13.800zM7.500 8.500H16V16l-8.500-1.200z" />
          </svg>
        </Task>
        <Task>
          <svg width="18" height="17" viewBox="0 0 18 17" fill="none" stroke="#fff" strokeWidth="1.300">
            <circle cx="10.500" cy="6.500" r="5.300" /><path d="M7 10.200.800 16.400" />
          </svg>
        </Task>
        <Task>
          <svg width="24" height="15" viewBox="0 0 24 15" fill="none" stroke="#fff" strokeWidth="1.100">
            <path d="M4.500 1.500h10v12h-10zM2.500 2.500H.500v10h2M16.500 2.500h3v10h-3" />
          </svg>
        </Task>
        <Task>
          <svg width="16" height="16" viewBox="0 0 16 16">
            <path d="M.500 7C1 2.500 4 .300 8 .300c4.700 0 7.500 3 7.500 7.400v1.600H5.300c.2 2.300 2 3.500 4.500 3.500 1.800 0 3.400-.5 4.800-1.400v3.200c-1.500.9-3.500 1.300-5.600 1.300-4.500 0-7-2.700-7-6.300C2 6.700 3.600 4.700 6 3.900 3.500 4 1.500 5 .500 7zm4.900-.3h5.700c0-1.700-.9-2.900-2.700-2.900-1.700 0-2.700 1.100-3 2.900z" fill="#0a7ad8" />
          </svg>
        </Task>
        <Task>
          <svg width="15" height="15" viewBox="0 0 15 15">
            <path d="M0 4h15v10H0z" fill="#fff" />
            <path d="M4.500 4V2.500c0-2 6-2 6 0V4" fill="none" stroke="#fff" />
            <path d="M4 5.500h3v3H4z" fill="#f25022" /><path d="M8 5.500h3v3H8z" fill="#7fba00" />
            <path d="M4 9.500h3v3H4z" fill="#00a4ef" /><path d="M8 9.500h3v3H8z" fill="#ffb900" />
          </svg>
        </Task>
        <Task>
          <svg width="14" height="14" viewBox="0 0 14 14">
            <rect x=".500" y=".500" width="13" height="10" rx="1" fill="#4a4a4a" stroke="#777" />
            <path d="M0 11h14v2.500H0z" fill="#a8a8a8" />
            <path d="M9.500 3H5.500v2.500h3.500V8H4.500" fill="none" stroke="#f08a1c" strokeWidth="1.500" />
          </svg>
        </Task>
        <Task $open>
          <svg width="16" height="14" viewBox="0 0 16 14">
            <path d="M0 .500h6l1.500 2H16V13H0z" fill="#f5cf62" /><path d="M0 4h16v9H0z" fill="#fde395" />
            <path d="M3 7h10v7h-2.500v-3.500h-5V14H3z" fill="#3fa9e0" />
          </svg>
        </Task>
        <Task $open>
          <svg width="14" height="14" viewBox="0 0 14 14">
            <circle cx="7" cy="7" r="7" fill="#fbc816" />
            <path d="M7 7 .900 3.500A7 7 0 0 1 13.100 3.700H7z" fill="#e33b2e" />
            <path d="M7 7l-2.800 1.600L.900 3.500A7 7 0 0 0 6.500 14l3.300-5.400z" fill="#2ba24c" />
            <circle cx="7" cy="7" r="3.400" fill="#fff" /><circle cx="7" cy="7" r="2.700" fill="#4285f4" />
          </svg>
        </Task>
        <Task $open $active><PaintLogo /></Task>
        <Task $open>
          <svg width="16" height="16" viewBox="0 0 16 16">
            <path d="M3.500 1.500h12L13 15.500H.500z" fill="#8fcfe0" stroke="#d8eef4" strokeWidth=".8" />
            <path d="M4.500 4.500h8.500M4 7h8.500M3.500 9.500h8.500M3 12h8.500" stroke="#4d9fb8" />
            <path d="M4 1.500h11" stroke="#e8e8e8" strokeWidth="2" strokeDasharray="1 1" />
          </svg>
        </Task>
        <Tray>
          <TrayItem $w={22}><svg width="13" height="8" viewBox="0 0 13 8"><path d="M.800 7 6.500 1.300 12.200 7" fill="none" stroke="#fff" strokeWidth="1.200" /></svg></TrayItem>
          <TrayItem $w={24}>
            <svg width="16" height="12" viewBox="0 0 16 12" fill="none" stroke="#fff">
              <path d="M5 3.500h9.500v6H4.500M15.500 5v3M1.500 0v2M4.500 0v2M.500 2.500h5v2l-1 1h-3l-1-1zM3 6v5.500h2" />
              <path d="M7 5h6v3H6V6z" fill="#fff" stroke="none" />
            </svg>
          </TrayItem>
          <TrayItem $w={28}>
            <svg width="17" height="14" viewBox="0 0 17 14" fill="none" stroke="#fff">
              <path d="M.500 4.500h2.500l3.500-3v11l-3.500-3H.500zM8.500 5c1 1.200 1 2.800 0 4M10.800 3.200c2 2.200 2 5.400 0 7.600M13.200 1.500c3 3.200 3 7.800 0 11" />
            </svg>
          </TrayItem>
          <TrayItem $w={34}><Label $ls={-0.5}>ESP</Label></TrayItem>
          <TrayItem $w={75}><Label $ls={-0.2}>10:53 p. m.</Label></TrayItem>
          <TrayItem $w={36}>
            <svg width="17" height="16" viewBox="0 0 17 16">
              <path d="M0 0h16v12H7.500L5 15v-3H0z" fill="#fff" />
              <path d="M3 3.500h10M3 6.500h10M3 9.500h5" stroke="#000" />
              <circle cx="12" cy="11.500" r="4" fill="#000" /><path d="M12.500 8.500a3 3 0 1 1-3 3.500c2 .5 3.500-1 3-3.500z" fill="none" stroke="#fff" />
            </svg>
          </TrayItem>
          <ShowDesktop />
        </Tray>
      </Taskbar>
    </Window>
  );
}
